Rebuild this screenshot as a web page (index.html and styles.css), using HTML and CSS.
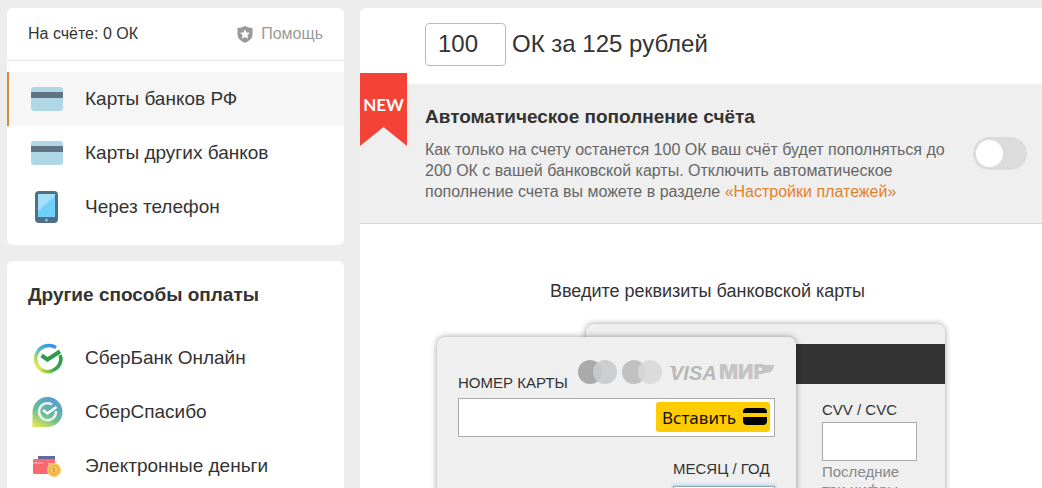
FILE: index.html
```html
<!DOCTYPE html>
<html lang="ru">
<head>
  <meta charset="UTF-8">
  <meta name="viewport" content="width=device-width, initial-scale=1.0">
  <title>Пополнение счёта</title>
  <link rel="stylesheet" href="styles.css">
</head>
<body>
  <div class="page">
    <aside class="sidebar">
      <section class="panel">
        <div class="balance">
          <span>На счёте: 0 ОК</span>
          <a class="help" href="#">
            <svg width="16" height="17" viewBox="0 0 16 17">
              <path fill="#999" d="M8 0C5.800 1.300 3.300 1.800 0.500 1.900V8c0 4.200 2.800 7 7.500 8.700C12.700 15 15.500 12.200 15.500 8V1.900C12.700 1.800 10.200 1.300 8 0z"/>
              <path fill="#fff" d="M8 3.200l1.500 3.200 3.500.4-2.600 2.400.7 3.500L8 11l-3.100 1.700.7-3.500L3 6.800l3.500-.4z"/>
            </svg>
            Помощь
          </a>
        </div>
        <nav class="methods">
          <a class="method active" href="#">
            <svg class="icon" viewBox="0 0 32 32">
              <rect y="4" width="32" height="24" rx="3" fill="#b0d7e5"/>
              <rect y="9" width="32" height="6" fill="#607483"/>
            </svg>
            Карты банков РФ
          </a>
          <a class="method" href="#">
            <svg class="icon" viewBox="0 0 32 32">
              <rect y="4" width="32" height="24" rx="3" fill="#b0d7e5"/>
              <rect y="9" width="32" height="6" fill="#607483"/>
            </svg>
            Карты других банков
          </a>
          <a class="method" href="#">
            <svg class="icon" viewBox="0 0 32 32">
              <rect x="4" width="23" height="32" rx="4" fill="#4f6e88"/>
              <rect x="7" y="3" width="17" height="23" fill="#6fd0fb"/>
              <path d="M7 3h17v2L7 20z" fill="#a5e0fb"/>
              <circle cx="15.500" cy="29" r="1.600" fill="#91b4c6"/>
            </svg>
            Через телефон
          </a>
        </nav>
      </section>

      <section class="panel">
        <h2 class="panel-title">Другие способы оплаты</h2>
        <nav class="methods-other">
          <a class="method" href="#">
            <svg class="icon" viewBox="0 0 32 32">
              <defs>
                <linearGradient id="ring" x1="0.900" y1="0.100" x2="0.300" y2="1">
                  <stop offset="0" stop-color="#3f93e0"/>
                  <stop offset="0.350" stop-color="#4fb0d8"/>
                  <stop offset="0.650" stop-color="#8fd07a"/>
                  <stop offset="1" stop-color="#e8e64a"/>
                </linearGradient>
                <linearGradient id="ring-end" x1="1" y1="0" x2="0" y2="1">
                  <stop offset="0" stop-color="#2f9a4c"/>
                  <stop offset="0.600" stop-color="#3ba455"/>
                  <stop offset="1" stop-color="#c5dd45"/>
                </linearGradient>
              </defs>
              <path d="M25 5.500A13 13 0 1 0 11 28.200" fill="none" stroke="url(#ring)" stroke-width="3.600"/>
              <path d="M29.200 13A13 13 0 0 1 10.500 28" fill="none" stroke="url(#ring-end)" stroke-width="3.600"/>
              <path d="M10.500 13.500l6 4L29 9.500" fill="none" stroke="#2f9a4c" stroke-width="4"/>
            </svg>
            СберБанк Онлайн
          </a>
          <a class="method" href="#">
            <svg class="icon" viewBox="0 0 32 32">
              <defs>
                <linearGradient id="drop" x1="0.700" y1="0" x2="0.150" y2="1">
                  <stop offset="0" stop-color="#5599de"/>
                  <stop offset="0.550" stop-color="#6bbd94"/>
                  <stop offset="1" stop-color="#dfe64e"/>
                </linearGradient>
              </defs>
              <path d="M1.500 31V16A15 15 0 1 1 16.500 31z" fill="url(#drop)"/>
              <path d="M21 8.500A8.500 8.500 0 1 0 25 15" fill="none" stroke="#e9f6f4" stroke-width="2.400"/>
              <path d="M12 14l4.500 3.500L25.500 11" fill="none" stroke="#fff" stroke-width="2.600"/>
            </svg>
            СберСпасибо
          </a>
          <a class="method" href="#">
            <svg class="icon" viewBox="0 0 32 32">
              <rect x="7" y="6" width="17" height="6" fill="#646b9b"/>
              <rect x="2" y="9" width="22" height="15" rx="1" fill="#fa6871"/>
              <path d="M2 12h10v2H2z" fill="#fb969b"/>
              <rect x="17" y="13" width="7" height="3" fill="#ffb1a8"/>
              <circle cx="23" cy="20" r="7" fill="#f7c75c"/>
              <circle cx="23" cy="20" r="4.500" fill="none" stroke="#e5a344"/>
              <path d="M23 17.500v5" stroke="#d99237" stroke-width="1.500"/>
            </svg>
            Электронные деньги
          </a>
        </nav>
      </section>
    </aside>

    <main class="main">
      <div class="amount">
        <input class="amount-input" id="amount" type="text" value="100">
        <label for="amount">ОК за 125 рублей</label>
      </div>

      <section class="auto">
        <div class="ribbon">NEW</div>
        <div class="auto-text">
          <h2 class="auto-title" id="auto-title">Автоматическое пополнение счёта</h2>
          <p class="auto-desc">Как только на счету останется 100 ОК ваш счёт будет пополняться до 200 ОК с вашей банковской карты. Отключить автоматическое пополнение счета вы можете в разделе <a href="#">«Настройки платежей»</a></p>
        </div>
        <input class="toggle" type="checkbox" aria-labelledby="auto-title">
      </section>

      <form class="payment">
        <p class="payment-title">Введите реквизиты банковской карты</p>
        <div class="cards">
          <div class="card card-back">
            <div class="stripe"></div>
            <div class="cvv">
              <label for="cvv">CVV / CVC</label>
              <input class="field" id="cvv" type="text">
              <span class="hint">Последние три цифры</span>
            </div>
          </div>
          <div class="card card-front">
            <div class="card-head">
              <label for="number">НОМЕР КАРТЫ</label>
              <svg class="brands" width="198" height="26" viewBox="0 0 198 26">
                <circle cx="13" cy="13" r="12" fill="#aaa"/>
                <circle cx="28" cy="13" r="12" fill="#c9cacb" fill-opacity="0.900"/>
                <circle cx="57" cy="13" r="12" fill="#c0c0c0"/>
                <circle cx="73" cy="13" r="12" fill="#d8d8d8" fill-opacity="0.900"/>
                <path d="M91 7h7l2 6c-2-3-5-5-9-6z" fill="#b8b8b8"/>
                <text class="brand-visa" x="93" y="21">VISA</text>
                <text class="brand-mir" x="142" y="20">МИР</text>
                <path d="M184 6h13c0 5-3 8-8 8h-3c3-1 5-4-2-8z" fill="#c4c4c4"/>
              </svg>
            </div>
            <div class="number">
              <input id="number" type="text">
              <button class="paste" type="button">
                Вставить
                <svg width="24" height="18" viewBox="0 0 24 18">
                  <path d="M0 5V4a4 4 0 0 1 4-4h16a4 4 0 0 1 4 4v1z"/>
                  <path d="M0 9h24v4a4 4 0 0 1-4 4H4a4 4 0 0 1-4-4z"/>
                </svg>
              </button>
            </div>
            <div class="expiry">
              <label for="expiry">МЕСЯЦ / ГОД</label>
              <input class="field focused" id="expiry" type="text">
            </div>
          </div>
        </div>
      </form>
    </main>
  </div>
</body>
</html>
```

FILE: styles.css
```css
* {
  box-sizing: border-box;
}
body {
  margin: 0;
  background: #ededed;
  color: #333;
  font-family: "Liberation Sans", Arial, sans-serif;
  font-size: 16px;
}
h2, p {
  margin: 0;
}
a {
  text-decoration: none;
}
input, button {
  font-family: inherit;
  color: inherit;
}
.page {
  display: flex;
  gap: 16px;
  height: 100vh;
  padding: 8px 0 0 7px;
  overflow: hidden;
}

/* Sidebar */
.sidebar {
  display: flex;
  flex-direction: column;
  flex: 0 0 337px;
  gap: 16px;
}
.panel {
  background: #fff;
  border-radius: 6px;
}
.balance {
  display: flex;
  align-items: center;
  justify-content: space-between;
  height: 53px;
  padding: 0 21px;
  border-bottom: 1px solid #e5e5e5;
}
.help {
  display: flex;
  align-items: center;
  gap: 8px;
  color: #999;
}
.methods {
  padding: 11px 0;
}
.method {
  display: flex;
  align-items: center;
  gap: 22px;
  height: 54px;
  padding-left: 21px;
  border-left: 3px solid transparent;
  color: #333;
  font-size: 19px;
}
.method.active {
  background: #f6f6f6;
  border-left: 2px solid #d9893a;
  padding-left: 22px;
}
.icon {
  width: 32px;
  height: 32px;
}
.panel-title {
  padding: 22px 21px 24px;
  font-size: 19px;
  line-height: 24px;
}

/* Amount and automatic top-up */
.main {
  flex: 1;
  min-width: 0;
  background: #fff;
  border-top-left-radius: 6px;
}
.amount {
  display: flex;
  align-items: center;
  gap: 6px;
  height: 76px;
  padding: 0 16px 4px 65px;
  font-size: 24px;
}
.amount-input {
  width: 81px;
  height: 43px;
  padding: 0 12px;
  border: 1px solid #bbb;
  border-radius: 4px;
  font-size: 24px;
}
.auto {
  position: relative;
  display: flex;
  align-items: center;
  justify-content: space-between;
  gap: 16px;
  height: 140px;
  padding: 0 15px 0 65px;
  background: #efefef;
  border-bottom: 1px solid #d8d8d8;
}
.ribbon {
  position: absolute;
  top: -11px;
  left: 0;
  width: 47px;
  height: 73px;
  background: #f44336;
  clip-path: polygon(0 0, 100% 0, 100% 100%, 50% 74%, 0 100%);
  color: #fff;
  font: bold 17px/64px Lato, sans-serif;
  text-align: center;
}
.auto-title {
  margin-bottom: 10px;
  font-size: 19px;
  line-height: 24px;
}
.auto-desc {
  color: #666;
  line-height: 21px;
}
.auto-desc a {
  color: #e38129;
}
.toggle {
  appearance: none;
  flex: none;
  width: 54px;
  height: 33px;
  margin: 0;
  padding: 3px;
  background: #dcdcdc;
  border-radius: 17px;
}
.toggle::before {
  content: "";
  display: block;
  width: 27px;
  height: 27px;
  background: #fff;
  border-radius: 50%;
}
.toggle:checked {
  background: #ee8208;
}
.toggle:checked::before {
  margin-left: auto;
}

/* Bank card form */
.payment {
  width: 565px;
  margin-left: 65px;
  padding-top: 56px;
}
.payment-title {
  font-size: 18px;
  line-height: 22px;
  text-align: center;
}
.cards {
  display: grid;
  grid-template-columns: 149px 210px 149px;
  margin: 22px 0 0 12px;
  font-size: 15px;
}
.card {
  height: 230px;
  background: #efefef;
  border-radius: 8px;
  box-shadow: 0 0 6px rgba(0, 0, 0, 0.4);
}
.card-back {
  grid-area: 1 / 2 / 2 / 4;
  padding-top: 20px;
}
.card-front {
  grid-area: 1 / 1 / 2 / 3;
  margin-top: 13px;
  padding: 22px 21px 0;
}
.stripe {
  height: 40px;
  background: #333;
}
.field {
  width: 100%;
  height: 39px;
  border: 1px solid #aaa;
  background: #fff;
}
.cvv {
  display: flex;
  flex-direction: column;
  gap: 2px;
  padding: 16px 28px 0 236px;
}
.cvv label {
  line-height: 20px;
}
.hint {
  color: #888;
  line-height: 18px;
}
.card-head {
  display: flex;
  justify-content: space-between;
}
.card-head label {
  padding-top: 15px;
  line-height: 18px;
}
.brands {
  flex: none;
}
.brand-visa {
  fill: #b8b8b8;
  font: italic bold 20px "Liberation Sans", sans-serif;
}
.brand-mir {
  fill: #c4c4c4;
  font: 900 20px Inter, sans-serif;
}
.number {
  display: flex;
  height: 39px;
  margin-top: 6px;
  padding: 3px 4px 4px;
  border: 1px solid #aaa;
  background: #fff;
}
.number input {
  flex: 1;
  min-width: 0;
  border: 0;
  outline: 0;
}
.paste {
  display: flex;
  align-items: center;
  justify-content: space-between;
  width: 114px;
  padding: 0 3px 0 6px;
  border: 0;
  border-radius: 3px;
  background: #fc0;
  color: #111;
  font: 17px "Noto Sans", sans-serif;
}
.expiry {
  display: flex;
  flex-direction: column;
  gap: 7px;
  width: 102px;
  margin: 22px 0 0 auto;
}
.expiry label {
  line-height: 20px;
  white-space: nowrap;
}
.focused {
  border-color: #8ab;
  box-shadow: 0 0 4px #7ab4e8;
}
```
